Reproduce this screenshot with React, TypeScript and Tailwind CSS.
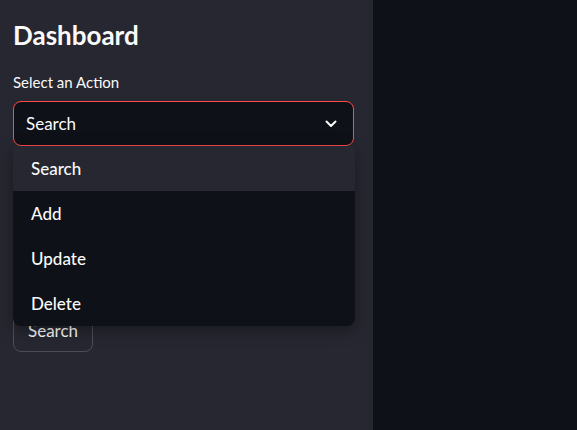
import React, { useState } from 'react';

const options = ['Search', 'Add', 'Update', 'Delete'];

const App: React.FC = () => {
  const [selected, setSelected] = useState('Search');
  const [open, setOpen] = useState(true);

  return (
    <div
      className="flex w-[577px] h-[430px] bg-[#0e1117] overflow-hidden text-[#fafafa]"
      style={{ fontFamily: '"Source Sans Pro", Lato, sans-serif' }}
    >
      {/* Sidebar */}
      <aside className="w-[373px] h-full bg-[#262730] px-[13px] pt-[19px] flex flex-col">
        <h1 className="text-[26px] font-bold leading-[32px]">Dashboard</h1>

        <label className="mt-[22px] text-[15px] leading-[18px]">Select an Action</label>

        <div className="relative mt-[10px]">
          <button
            onClick={() => setOpen(!open)}
            className="w-[341px] h-[45px] rounded-[8px] border border-[#ff4b4b] bg-[#0e1117] flex items-center justify-between pl-[12px] pr-[16px] text-[17px]"
          >
            <span>{selected}</span>
            <svg width="12" height="8" viewBox="0 0 12 8" fill="none">
              <path d="M1.5 1.5 L6 6 L10.5 1.5" stroke="#fafafa" strokeWidth="2" strokeLinecap="round" strokeLinejoin="round" />
            </svg>
          </button>

          {open && (
            <ul className="absolute left-0 top-[45px] w-[342px] bg-[#0e1117] rounded-b-[8px] overflow-hidden shadow-[0_4px_16px_rgba(0,0,0,0.35)] z-10">
              {options.map((o) => (
                <li
                  key={o}
                  onClick={() => {
                    setSelected(o);
                    setOpen(false);
                  }}
                  className={`h-[45px] flex items-center pl-[18px] text-[17px] font-medium cursor-pointer ${
                    o === selected ? 'bg-[#262730]' : ''
                  }`}
                >
                  {o}
                </li>
              ))}
            </ul>
          )}
        </div>

        <div className="mt-[164px]">
          <button className="h-[42px] px-[14px] rounded-[8px] border border-[#4c4d57] text-[17px]">
            Search
          </button>
        </div>
      </aside>

      {/* Main area */}
      <main className="flex-1 h-full" />
    </div>
  );
};

export default App;
